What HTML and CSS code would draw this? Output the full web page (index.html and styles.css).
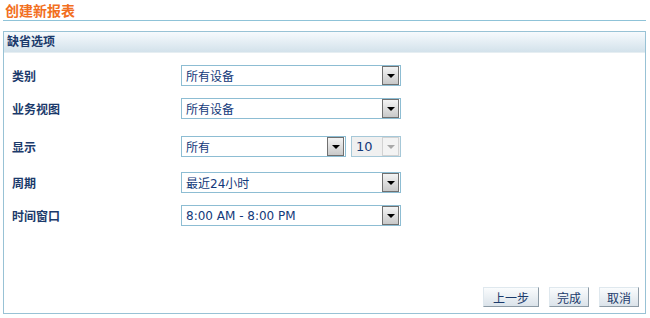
FILE: index.html
```html
<!DOCTYPE html>
<html lang="zh-CN">
<head>
    <meta charset="UTF-8">
    <title>创建新报表</title>
    <link rel="stylesheet" href="styles.css">
</head>
<body>
    <h1 class="page-title">创建新报表</h1>

    <div class="panel">
        <div class="panel-header">缺省选项</div>
        <div class="panel-body">
            <!-- option rows -->
            <div class="row row-first">
                <label class="row-label">类别</label>
                <div class="dropdown">
                    <span class="dropdown-value">所有设备</span>
                    <span class="dropdown-arrow"></span>
                </div>
            </div>
            <div class="row">
                <label class="row-label">业务视图</label>
                <div class="dropdown">
                    <span class="dropdown-value">所有设备</span>
                    <span class="dropdown-arrow"></span>
                </div>
            </div>
            <div class="row row-wide">
                <label class="row-label">显示</label>
                <div class="dropdown dropdown-short">
                    <span class="dropdown-value">所有</span>
                    <span class="dropdown-arrow"></span>
                </div>
                <div class="dropdown dropdown-small disabled">
                    <span class="dropdown-value">10</span>
                    <span class="dropdown-arrow"></span>
                </div>
            </div>
            <div class="row row-mid">
                <label class="row-label">周期</label>
                <div class="dropdown">
                    <span class="dropdown-value">最近24小时</span>
                    <span class="dropdown-arrow"></span>
                </div>
            </div>
            <div class="row">
                <label class="row-label">时间窗口</label>
                <div class="dropdown">
                    <span class="dropdown-value">8:00 AM - 8:00 PM</span>
                    <span class="dropdown-arrow"></span>
                </div>
            </div>

            <div class="actions">
                <button class="btn btn-prev">上一步</button>
                <button class="btn">完成</button>
                <button class="btn">取消</button>
            </div>
        </div>
    </div>
</body>
</html>
```

FILE: styles.css
```css
body {
    margin: 0;
    padding: 0;
    background-color: #fff;
    font-family: "DejaVu Sans", "Noto Sans CJK SC", sans-serif;
    font-size: 12px;
    color: #1b3a6b;
}
.page-title {
    margin: 0 4px 0 3px;
    padding: 2px 0 0 2px;
    height: 18px;
    font-size: 14px;
    line-height: 18px;
    font-weight: bold;
    color: #f2701f;
    border-bottom: 1px solid #8fc3d8;
}
.panel {
    margin: 10px 4px 0 3px;
    height: 281px;
    border: 1px solid #98c2d5;
    display: flex;
    flex-direction: column;
}
.panel-header {
    height: 20px;
    line-height: 20px;
    padding-left: 3px;
    font-weight: bold;
    color: #1b3a6b;
    background: linear-gradient(#f6fafd, #d3e2eb);
    border-bottom: 1px solid #e6eef2;
}
.panel-body {
    flex: 1;
    display: flex;
    flex-direction: column;
    padding: 12px 6px 6px 8px;
}
.row {
    display: flex;
    align-items: center;
    margin-top: 12px;
}
.row-first {
    margin-top: 0;
}
.row-wide {
    margin-top: 17px;
}
.row-mid {
    margin-top: 15px;
}
.row-label {
    width: 169px;
    font-weight: bold;
    color: #1b3a6b;
}
.dropdown {
    width: 218px;
    height: 19px;
    border: 1px solid #8dbdd3;
    background-color: #fff;
    display: flex;
    align-items: center;
    justify-content: space-between;
}
.dropdown-short {
    width: 163px;
}
.dropdown-small {
    width: 48px;
    margin-left: 5px;
}
.dropdown-value {
    padding-left: 4px;
    color: #13397a;
    white-space: nowrap;
}
.dropdown-arrow {
    width: 15px;
    height: 17px;
    margin-right: 1px;
    border: 1px solid #707070;
    background: linear-gradient(#f4f4f4, #c9c9c9);
    position: relative;
}
.dropdown-arrow::after {
    content: "";
    position: absolute;
    left: 4px;
    top: 7px;
    border-left: 4px solid transparent;
    border-right: 4px solid transparent;
    border-top: 4px solid #000;
}
.disabled {
    background-color: #f0f0f0;
    border-color: #a6c8d8;
}
.disabled .dropdown-value {
    font-size: 13px;
}
.disabled .dropdown-arrow {
    border-color: #d2d2d2;
    background: #f3f3f3;
}
.disabled .dropdown-arrow::after {
    border-top-color: #a9a9a9;
}
.actions {
    margin-top: auto;
    display: flex;
    justify-content: flex-end;
    gap: 10px;
}
.btn {
    height: 20px;
    padding: 0 7px;
    font-family: "DejaVu Sans", "Noto Sans CJK SC", sans-serif;
    font-size: 12px;
    color: #1b3a6b;
    background: linear-gradient(#fafcfd, #dbe3ea);
    border: 1px solid;
    border-color: #dfe8ee #8c9aa5 #8c9aa5 #dfe8ee;
    cursor: pointer;
}
.btn-prev {
    padding: 0 9px;
}
.btn:hover {
    background: linear-gradient(#ffffff, #e6edf2);
}
```
